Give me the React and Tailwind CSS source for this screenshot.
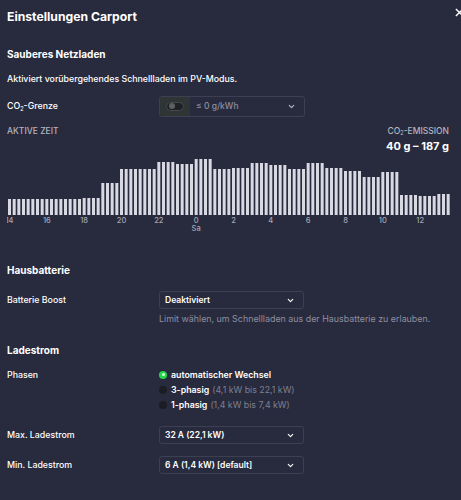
import React from "react";

const heights = [
  ...Array(16).fill(16),
  ...Array(4).fill(17),
  ...Array(4).fill(32),
  ...Array(8).fill(46),
  ...Array(4).fill(53),
  ...Array(4).fill(51),
  ...Array(4).fill(56),
  ...Array(4).fill(46),
  ...Array(4).fill(47),
  ...Array(4).fill(52),
  ...Array(4).fill(50),
  ...Array(4).fill(46),
  ...Array(4).fill(52),
  ...Array(4).fill(47),
  ...Array(4).fill(44),
  ...Array(4).fill(38),
  ...Array(4).fill(43),
  ...Array(4).fill(20),
  ...Array(4).fill(19),
  ...Array(3).fill(21),
];

const hourLabels = [14, 16, 18, 20, 22, 0, 2, 4, 6, 8, 10, 12];
const PITCH = 14 / 3;

function Chevron() {
  return (
    <svg width="9" height="9" viewBox="0 0 24 24" fill="none" stroke="currentColor" strokeWidth="3" strokeLinecap="round" strokeLinejoin="round">
      <path d="M6 9l6 6 6-6" />
    </svg>
  );
}

function Select({ children }) {
  return (
    <div className="flex h-[18px] w-[145px] items-center justify-between rounded-[3px] border border-[#3d3f52] pl-[5px] pr-[8px]">
      <span className="text-[8.5px] font-semibold text-white">{children}</span>
      <span className="text-white"><Chevron /></span>
    </div>
  );
}

function Radio({ checked, label, sub }) {
  return (
    <div className="flex h-[15px] items-center gap-[4px] text-[8.8px]">
      {checked ? (
        <span className="flex h-[8px] w-[8px] items-center justify-center rounded-full bg-[#22d84a]">
          <span className="h-[3px] w-[3px] rounded-full bg-[#d4ffdc]" />
        </span>
      ) : (
        <span className="h-[8px] w-[8px] rounded-full bg-[#1c1d24]" />
      )}
      <span className="font-semibold text-white">
        {label}
        {sub && <span className="ml-[3px] font-normal text-[#7f8090]">{sub}</span>}
      </span>
    </div>
  );
}

export default function App() {
  return (
    <div
      className="relative h-[500px] w-[461px] overflow-hidden bg-[#282a3d] text-[8.8px] text-white"
      style={{ fontFamily: "Inter, 'Noto Sans', sans-serif" }}
    >
      <svg className="absolute left-[455px] top-[8px]" width="9" height="9" viewBox="0 0 10 10" stroke="white" strokeWidth="1.6">
        <path d="M1 1l8 8M9 1L1 9" />
      </svg>

      <div className="flex flex-col pl-[7px] pr-[12px]">
        <div className="flex h-[34px] items-center pt-[1px]">
          <h1 className="text-[12.2px] font-bold">Einstellungen Carport</h1>
        </div>

        <div className="mt-[10px] flex h-[20px] items-center">
          <h2 className="text-[10px] font-bold">Sauberes Netzladen</h2>
        </div>

        <div className="mt-[5px] flex h-[20px] items-center font-medium">
          Aktiviert vorübergehendes Schnellladen im PV-Modus.
        </div>

        <div className="mt-[6px] flex h-[22px] items-center">
          <div className="w-[152px] font-medium">
            CO<sub className="text-[5.5px]">2</sub>-Grenze
          </div>
          <div className="flex h-[21px] w-[146px] items-stretch overflow-hidden rounded-[3px] border border-[#3d3f52]">
            <div className="flex w-[30px] items-center justify-center bg-[#2f3434]">
              <div className="flex h-[9px] w-[18px] items-center rounded-full border border-[#46494a] bg-[#1f2124] pl-[2px]">
                <div className="h-[6px] w-[6px] rounded-full bg-[#5d6062]" />
              </div>
            </div>
            <div className="flex flex-1 items-center justify-between pl-[6px] pr-[8px]">
              <span className="text-[8.5px] font-medium text-[#8e8fa0]">≤ 0 g/kWh</span>
              <span className="text-[#b9bac4]"><Chevron /></span>
            </div>
          </div>
        </div>

        <div className="flex h-[143px] flex-col">
          <div className="mt-[8px] flex items-start justify-between">
            <div className="text-[8.5px] font-medium uppercase leading-[12px] text-[#b3b4c0]">Aktive Zeit</div>
            <div className="flex flex-col items-end">
              <div className="text-[8.5px] font-medium uppercase leading-[12px] text-[#b3b4c0]">
                CO<sub className="text-[5.5px]">2</sub>-Emission
              </div>
              <div className="mt-[1px] text-[11px] font-bold leading-[16px]">40 g – 187 g</div>
            </div>
          </div>

          <div className="relative mt-[5px] h-[75px] w-[446px] overflow-hidden">
            <svg width="446" height="56" className="block">
              {heights.map((h, i) => (
                <rect key={i} x={1 + i * PITCH} y={56 - h} width="3" height={h} fill="#d9d9e3" />
              ))}
            </svg>
            {hourLabels.map((l, k) => (
              <div
                key={k}
                className="absolute top-[58px] -translate-x-1/2 text-[7.5px] font-medium leading-[8px] text-[#a6a7b4]"
                style={{ left: 1 + k * 8 * PITCH + 1.5 }}
              >
                {l}
              </div>
            ))}
            <div
              className="absolute top-[66px] -translate-x-1/2 text-[7.5px] font-medium leading-[8px] text-[#a6a7b4]"
              style={{ left: 1 + 40 * PITCH + 1.5 }}
            >
              Sa
            </div>
          </div>
        </div>

        <div className="flex h-[20px] items-center">
          <h2 className="text-[10px] font-bold">Hausbatterie</h2>
        </div>

        <div className="mt-[11px] flex items-center">
          <div className="w-[152px] font-medium">Batterie Boost</div>
          <Select>Deaktiviert</Select>
        </div>
        <div className="ml-[152px] mt-[3px] whitespace-nowrap text-[8.9px] leading-[14px] text-[#8e8fa0]">
          Limit wählen, um Schnellladen aus der Hausbatterie zu erlauben.
        </div>

        <div className="mt-[14px] flex h-[20px] items-center">
          <h2 className="text-[10px] font-bold">Ladestrom</h2>
        </div>

        <div className="mt-[7px] flex">
          <div className="w-[152px] pt-[1px] font-medium leading-[13px]">Phasen</div>
          <div className="flex flex-col">
            <Radio checked label="automatischer Wechsel" />
            <Radio label="3-phasig" sub="(4,1 kW bis 22,1 kW)" />
            <Radio label="1-phasig" sub="(1,4 kW bis 7,4 kW)" />
          </div>
        </div>

        <div className="mt-[14px] flex items-center">
          <div className="w-[152px] font-medium">Max. Ladestrom</div>
          <Select>32 A (22,1 kW)</Select>
        </div>

        <div className="mt-[12px] flex items-center">
          <div className="w-[152px] font-medium">Min. Ladestrom</div>
          <Select>6 A (1,4 kW) [default]</Select>
        </div>
      </div>
    </div>
  );
}
